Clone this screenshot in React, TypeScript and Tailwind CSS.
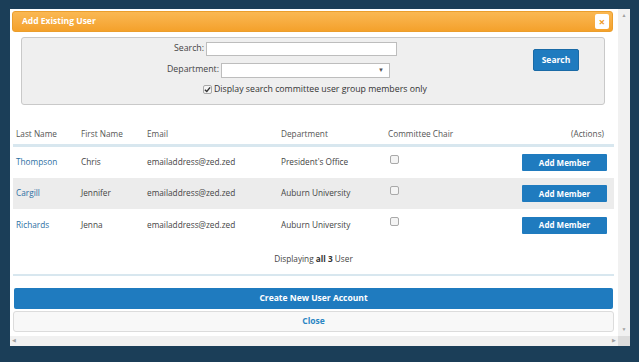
import React from "react";

const users = [
  { last: "Thompson", first: "Chris", email: "emailaddress@zed.zed", dept: "President's Office" },
  { last: "Cargill", first: "Jennifer", email: "emailaddress@zed.zed", dept: "Auburn University" },
  { last: "Richards", first: "Jenna", email: "emailaddress@zed.zed", dept: "Auburn University" },
];

function Checkbox({ checked = false }: { checked?: boolean }) {
  return (
    <span className="inline-flex h-[9px] w-[9px] items-center justify-center rounded-[2px] border border-[#a9a9a9] bg-[#f4f4f4]">
      {checked && (
        <svg width="7" height="7" viewBox="0 0 8 8">
          <path d="M1 4.2 L3.2 6.3 L7 1.5" stroke="#333" strokeWidth="1.6" fill="none" />
        </svg>
      )}
    </span>
  );
}

export default function App() {
  return (
    <div
      className="h-[362px] w-[639px] overflow-hidden bg-[#1b3e58] pl-[10px] pt-[9px] text-[8.25px] text-[#444]"
      style={{ fontFamily: '"Open Sans", "Liberation Sans", sans-serif' }}
    >
      <div className="flex h-[337px] w-[620px] flex-col bg-white">
        <div className="flex min-h-0 flex-1">
          {/* content */}
          <div className="flex w-[608px] flex-col overflow-hidden">
            {/* header */}
            <div className="ml-[2px] mr-[5px] mt-[2px] flex h-[21px] items-center justify-between rounded-[3px] border border-[#eb9e2c] bg-gradient-to-b from-[#fab852] to-[#f4a12a] pl-[9px] pr-[3px]">
              <span className="text-[8.5px] font-bold text-white">Add Existing User</span>
              <span className="flex h-[15px] w-[14px] items-center justify-center rounded-[2px] bg-white text-[11px] font-bold leading-none text-[#ee9a24]">
                ×
              </span>
            </div>

            {/* search panel */}
            <div className="ml-[11px] mr-[13px] mt-[5px] flex h-[68px] rounded-[3px] border border-[#c9c9c9] bg-[#efefef] text-[8.75px]">
              <div className="flex flex-1 flex-col pt-[3px]">
                <div className="flex h-[15px] items-center">
                  <span className="w-[184px] pr-[2px] text-right">Search:</span>
                  <span className="h-[14px] w-[191px] border border-[#bdbdbd] bg-white" />
                </div>
                <div className="mt-[6px] flex h-[16px] items-center">
                  <span className="w-[199px] pr-[2px] text-right">Department:</span>
                  <span className="flex h-[15px] w-[169px] items-center justify-end border border-[#bdbdbd] bg-white pr-[5px] text-[6px] text-[#555]">
                    ▼
                  </span>
                </div>
                <div className="mt-[5px] flex items-center pl-[181px]">
                  <Checkbox checked />
                  <span className="ml-[2px] text-[#333]">Display search committee user group members only</span>
                </div>
              </div>
              <div className="pr-[25px] pt-[11px]">
                <span className="flex h-[22px] w-[46px] items-center justify-center rounded-[2px] border border-[#1a6aa6] bg-[#1f7bbf] text-[8.5px] font-bold text-white">
                  Search
                </span>
              </div>
            </div>

            {/* table */}
            <div className="ml-[3px] mr-[4px] mt-[23px]">
              <div className="flex h-[19px] items-center border-b-[3px] border-[#d8e7ef] pb-[4px] text-[#555]">
                <span className="w-[68px] pl-[3px]">Last Name</span>
                <span className="w-[66px]">First Name</span>
                <span className="w-[134px]">Email</span>
                <span className="w-[107px]">Department</span>
                <span className="flex-1">Committee Chair</span>
                <span className="pr-[10px]">(Actions)</span>
              </div>
              {users.map((u, i) => (
                <div
                  key={u.last}
                  className={`flex items-center ${i === 1 ? "bg-[#ececec]" : "bg-white"} ${i === 2 ? "h-[32px]" : "h-[31px]"}`}
                >
                  <span className="w-[68px] pl-[3px] text-[#2d6fa3]">{u.last}</span>
                  <span className="w-[66px]">{u.first}</span>
                  <span className="w-[134px]">{u.email}</span>
                  <span className="w-[107px]">{u.dept}</span>
                  <span className="flex-1 pb-[3px] pl-[2px]">
                    <Checkbox />
                  </span>
                  <span className="mr-[7px] flex h-[17px] w-[85px] items-center justify-center rounded-[1px] bg-[#1f7bbf] text-[8px] font-bold text-white">
                    Add Member
                  </span>
                </div>
              ))}
              <div className="flex h-[35px] items-center justify-center border-b-[2px] border-[#d8e7ef] pt-[4px] text-[#444]">
                Displaying&nbsp;<b className="text-[#333]">all 3</b>&nbsp;User
              </div>
            </div>

            {/* bottom buttons */}
            <div className="ml-[3px] mr-[4px] mt-[12px] flex flex-col gap-[2px]">
              <div className="ml-[1px] mr-[1px] flex h-[21px] items-center justify-center rounded-[2px] bg-[#1f7bbf] text-[8.5px] font-bold text-white">
                Create New User Account
              </div>
              <div className="flex h-[21px] items-center justify-center rounded-[3px] border border-[#dcdcdc] bg-[#f8f8f8] text-[8.5px] font-bold text-[#2a86c4]">
                Close
              </div>
            </div>
          </div>

          {/* vertical scrollbar */}
          <div className="flex w-[12px] flex-col items-center justify-between bg-[#f1f1f1] py-[3px] text-[5px] text-[#a0a0a0]">
            <span>▲</span>
            <span>▼</span>
          </div>
        </div>

        {/* horizontal scrollbar */}
        <div className="flex h-[10px] bg-[#f1f1f1]">
          <div className="flex w-[608px] items-center justify-between px-[2px] text-[5px] text-[#a0a0a0]">
            <span>◀</span>
            <span>▶</span>
          </div>
          <div className="w-[12px] bg-[#dcdcdc]" />
        </div>
      </div>
    </div>
  );
}
